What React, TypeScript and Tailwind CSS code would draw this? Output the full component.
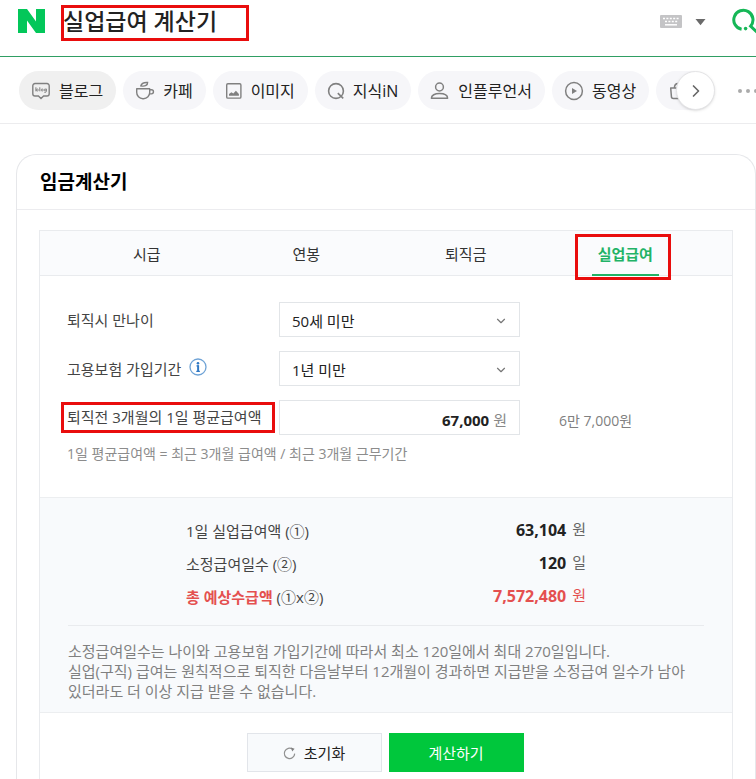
import React, { useState } from 'react';
import { ChevronDown, ChevronRight } from 'lucide-react';

const TABS = ['시급', '연봉', '퇴직금', '실업급여'];

// Red marker box drawn around its relative parent
function Marker({ className }: { className: string }) {
  return (
    <span
      aria-hidden="true"
      className={`pointer-events-none absolute border-[3px] border-[#e90d0d] ${className}`}
    />
  );
}

function BlogIcon() {
  return (
    <svg width="20" height="20" viewBox="0 0 20 20" fill="none" stroke="#808080" strokeWidth="1.4">
      <path d="M4 2.5h12a2.2 2.2 0 0 1 2.2 2.2v8.1A2.2 2.2 0 0 1 16 15h-3.4L10 17.6 7.4 15H4a2.2 2.2 0 0 1-2.2-2.2V4.7A2.2 2.2 0 0 1 4 2.5z" />
      <path d="M4.9 6.3v4M8.8 6.3v4" strokeWidth="1" />
      <circle cx="6.3" cy="9" r="1" strokeWidth="0.9" />
      <circle cx="11.2" cy="9" r="1" strokeWidth="0.9" />
      <circle cx="14.2" cy="9" r="1" strokeWidth="0.9" />
      <path d="M15.4 7.7v2.8q0 1.1-2.1.9" strokeWidth="0.9" />
    </svg>
  );
}

function CafeIcon() {
  return (
    <svg width="20" height="20" viewBox="0 0 20 20" fill="none" stroke="#808080" strokeWidth="1.4">
      <path d="M1.7 7.7h13v3.6a6.2 6.2 0 0 1-6.2 6.4h-.6a6.2 6.2 0 0 1-6.2-6.4z" strokeLinejoin="round" />
      <path d="M14.8 8.8h1.6a2 2 0 0 1 0 4.1h-2" />
      <path d="M5.8 4.9C6.4 2.6 8.4 1.2 12.6 1.5c.1 2.5-2.2 4.3-6.8 3.4z" />
    </svg>
  );
}

function ImageIcon() {
  return (
    <svg width="18" height="20" viewBox="0 0 18 20" fill="none" stroke="#808080" strokeWidth="1.4">
      <rect x="1.7" y="2.7" width="14.2" height="14.4" rx="1.2" />
      <path d="M4 14.7v-1.6l2.4-1.9 1.9 1.2 2.6-2.6 3 3.1v1.8z" fill="#808080" stroke="none" />
    </svg>
  );
}

function KinIcon() {
  return (
    <svg width="18" height="20" viewBox="0 0 18 20" fill="none" stroke="#808080" strokeWidth="1.6">
      <circle cx="9" cy="10" r="7.4" />
      <path d="M10.8 12.2l5.4 5.2" />
    </svg>
  );
}

function PersonIcon() {
  return (
    <svg width="20" height="20" viewBox="0 0 20 20" fill="none" stroke="#808080" strokeWidth="1.5">
      <circle cx="9.5" cy="6" r="3.9" />
      <path d="M1.4 17.3c0-3 3.4-4.8 8.1-4.8s8.1 1.8 8.1 4.8z" strokeLinejoin="round" />
    </svg>
  );
}

function PlayIcon() {
  return (
    <svg width="20" height="20" viewBox="0 0 20 20" fill="none" stroke="#808080" strokeWidth="1.5">
      <circle cx="10" cy="10" r="8.4" />
      <path d="M8 6.9v6.2l5-3.1z" fill="#808080" stroke="none" />
    </svg>
  );
}

function BagIcon() {
  return (
    <svg width="20" height="20" viewBox="0 0 20 20" fill="none" stroke="#808080" strokeWidth="1.5">
      <path d="M2.7 7h14.6v8.4a2 2 0 0 1-2 2H5.4a2 2 0 0 1-2-2z" strokeLinejoin="round" />
      <path d="M6.4 7c0-3 1.4-4.6 3.8-4.6S14 4 14 7" />
    </svg>
  );
}

const CHIPS = [
  { label: '블로그', icon: <BlogIcon />, active: true },
  { label: '카페', icon: <CafeIcon /> },
  { label: '이미지', icon: <ImageIcon /> },
  { label: '지식iN', icon: <KinIcon /> },
  { label: '인플루언서', icon: <PersonIcon /> },
  { label: '동영상', icon: <PlayIcon /> },
];

function SearchHeader() {
  return (
    <header className="flex h-[57px] items-start overflow-hidden border-b border-[#2f9e63] pl-[18px] pt-[5px]">
      <a href="#" aria-label="NAVER" className="mt-1 shrink-0">
        <svg width="27" height="24" viewBox="0 0 27 24">
          <path d="M0 0h9l9 12.6V0h9v24h-9L9 11.4V24H0z" fill="#03c75a" />
        </svg>
      </a>
      <div className="relative ml-4 h-9 w-[188px] shrink-0">
        <input
          aria-label="검색어"
          defaultValue="실업급여 계산기"
          className="h-[33px] w-full bg-transparent px-0.5 text-[23px] font-medium text-[#222] outline-none"
        />
        <Marker className="inset-0" />
      </div>
      <div className="flex-1" />
      <button aria-label="입력기" className="mt-2.5 flex shrink-0 items-center">
        <svg width="22" height="13" viewBox="0 0 22 13">
          <rect width="22" height="13" rx="1" fill="#c4c4c6" />
          <path d="M3 3.5h17M5 6.5h13" stroke="#fff" strokeWidth="1.5" strokeDasharray="2 1.4" />
          <path d="M5 9.8h12" stroke="#fff" strokeWidth="1.5" />
        </svg>
      </button>
      <button aria-label="자동완성" className="ml-[13px] mt-3.5 shrink-0">
        <svg width="11" height="7" viewBox="0 0 11 7">
          <path d="M0.5 0h10L5.5 6.2z" fill="#6a6a6a" />
        </svg>
      </button>
      <button aria-label="검색" className="-mr-[5px] ml-[26px] mt-[3px] shrink-0">
        <svg width="29" height="28" viewBox="0 0 29 28" fill="none" stroke="#16b757" strokeWidth="3">
          <path d="M9.6 21.3A9.6 9.6 0 1 1 18.6 18.2L27 26" />
          <circle cx="13.6" cy="20.6" r="1.8" fill="#16b757" stroke="none" />
        </svg>
      </button>
    </header>
  );
}

function CategoryNav() {
  return (
    <nav className="flex items-center overflow-hidden border-b border-[#ececee] pb-[13px] pl-[19px] pt-3.5">
      <div className="flex min-w-0 flex-1 gap-[7px] overflow-hidden">
        {CHIPS.map((chip) => (
          <a
            key={chip.label}
            href="#"
            className={`flex h-[39px] shrink-0 items-center gap-2 whitespace-nowrap rounded-full pl-3 pr-[13px] text-base text-[#222] ${
              chip.active ? 'bg-[#f0f0f0]' : 'bg-[#f6f6f9]'
            }`}
          >
            {chip.icon}
            <span>{chip.label}</span>
          </a>
        ))}
        <a
          href="#"
          aria-label="쇼핑"
          className="flex h-[39px] w-20 shrink-0 items-center rounded-full bg-[#f6f6f9] pl-3"
        >
          <BagIcon />
        </a>
      </div>
      <button
        aria-label="다음"
        className="z-10 -ml-5 flex h-[39px] w-[39px] shrink-0 items-center justify-center rounded-full border border-[#e4e4e6] bg-white shadow-sm"
      >
        <ChevronRight className="h-5 w-5 text-[#666]" strokeWidth={2} />
      </button>
      <button aria-label="더보기" className="-mr-0.5 ml-[23px] flex shrink-0 gap-1">
        <span className="h-1 w-1 rounded-full bg-[#aaa]" />
        <span className="h-1 w-1 rounded-full bg-[#aaa]" />
        <span className="h-1 w-1 rounded-full bg-[#aaa]" />
      </button>
    </nav>
  );
}

interface SelectBoxProps {
  id: string;
  options: string[];
}

function SelectBox({ id, options }: SelectBoxProps) {
  return (
    <div className="relative h-[35px] w-[241px]">
      <select
        id={id}
        className="h-full w-full appearance-none border border-[#e2e5e8] bg-white px-3 pt-1 text-[15px] text-[#222] outline-none"
      >
        {options.map((option) => (
          <option key={option}>{option}</option>
        ))}
      </select>
      <ChevronDown
        className="pointer-events-none absolute right-3 top-3 h-3.5 w-3.5 text-[#777]"
        strokeWidth={2}
      />
    </div>
  );
}

function CalculatorForm() {
  return (
    <div className="px-[27px] pb-[33px] pt-[26px] text-[15px] text-[#444]">
      <div className="grid grid-cols-[212px_1fr] items-center gap-y-3.5">
        <label htmlFor="age" className="pt-0.5">퇴직시 만나이</label>
        <SelectBox id="age" options={['50세 미만', '50세 이상']} />

        <div className="flex items-center gap-2">
          <label htmlFor="period" className="pt-0.5">고용보험 가입기간</label>
          <button type="button" aria-label="가입기간 안내" className="pb-1">
            <svg width="18" height="18" viewBox="0 0 18 18" fill="none">
              <circle cx="9" cy="9" r="8" stroke="#6fa3d6" strokeWidth="1.3" />
              <circle cx="9" cy="5.2" r="1.3" fill="#2f78c4" />
              <path d="M7.5 7.9h1.6v5.4M7.3 13.4h3.6" stroke="#2f78c4" strokeWidth="1.3" />
              <path d="M9.2 7.3v6" stroke="#2f78c4" strokeWidth="1.8" />
            </svg>
          </button>
        </div>
        <SelectBox id="period" options={['1년 미만', '1년 이상 ~ 3년 미만', '3년 이상 ~ 5년 미만']} />

        <div className="relative">
          <label htmlFor="wage">퇴직전 3개월의 1일 평균급여액</label>
          <Marker className="-bottom-1 -left-1.5 -top-1 right-1" />
        </div>
        <div className="flex items-center">
          <div className="flex h-[35px] w-[241px] items-center border border-[#e2e5e8] bg-white pr-3 pt-1.5">
            <input
              id="wage"
              defaultValue="67,000"
              className="w-0 min-w-0 flex-1 bg-transparent text-right font-bold text-[#222] outline-none"
            />
            <span className="ml-1 text-[#888]">원</span>
          </div>
          <span className="ml-[39px] pt-1.5 text-sm text-[#808080]">6만 7,000원</span>
        </div>
      </div>
      <p className="mt-[9px] text-sm text-[#8c8c8c]">
        1일 평균급여액 = 최근 3개월 급여액 / 최근 3개월 근무기간
      </p>
    </div>
  );
}

function ResultPanel() {
  return (
    <section className="border-y border-[#eceef0] bg-[#f8fafc] px-7 pb-[11px] pt-4 text-[15px]">
      <dl className="mx-auto w-[400px] max-w-full text-[#444]">
        <div className="flex h-[33px] items-center justify-between">
          <dt className="pt-0.5">1일 실업급여액 (①)</dt>
          <dd className="flex items-center gap-1.5 pb-0.5 text-[#666]">
            <strong className="text-base text-[#222]">63,104</strong>원
          </dd>
        </div>
        <div className="flex h-[33px] items-center justify-between">
          <dt className="pt-0.5">소정급여일수 (②)</dt>
          <dd className="flex items-center gap-1.5 pb-0.5 text-[#666]">
            <strong className="text-base text-[#222]">120</strong>일
          </dd>
        </div>
        <div className="flex h-[33px] items-center justify-between">
          <dt className="pt-0.5">
            <strong className="text-[#e4504f]">총 예상수급액</strong> (①x②)
          </dt>
          <dd className="flex items-center gap-1.5 pb-0.5 text-[#e4504f]">
            <strong className="text-base">7,572,480</strong>원
          </dd>
        </div>
      </dl>
      <p className="mt-3 border-t border-[#e9ebee] pr-2 pt-[15px] leading-5 text-[#808080]">
        소정급여일수는 나이와 고용보험 가입기간에 따라서 최소 120일에서 최대 270일입니다.
        <br />
        실업(구직) 급여는 원칙적으로 퇴직한 다음날부터 12개월이 경과하면 지급받을 소정급여 일수가 남아있더라도 더 이상 지급 받을 수 없습니다.
      </p>
    </section>
  );
}

export default function App() {
  const [tab, setTab] = useState('실업급여');

  return (
    <div className="flex min-h-screen flex-col overflow-hidden bg-white font-['Open_Sans','Noto_Sans_CJK_KR',sans-serif]">
      <SearchHeader />
      <CategoryNav />

      <main className="ml-4 mt-[30px] flex flex-1 flex-col rounded-t-[20px] border border-b-0 border-[#e6e7ea]">
        <h1 className="flex h-[55px] items-center border-b border-[#ececef] pl-[23px] text-[19px] font-bold text-black">
          임금계산기
        </h1>

        <div className="ml-[22px] mr-[22px] mt-5 flex-1 border border-b-0 border-[#e9ebee]">
          {/* Calculator type tabs */}
          <div role="tablist" className="flex h-[45px] border-b border-[#e9ebee] bg-[#fafbfd] px-[27px]">
            {TABS.map((name) => (
              <button
                key={name}
                role="tab"
                aria-selected={tab === name}
                onClick={() => setTab(name)}
                className="flex flex-1 justify-center text-[15px]"
              >
                <span
                  className={`relative flex h-[45px] items-center px-1.5 ${
                    tab === name
                      ? 'border-b-2 border-[#22b366] pt-1 font-bold text-[#22b366]'
                      : 'pt-0.5 text-[#333]'
                  }`}
                >
                  {name}
                  {name === '실업급여' && <Marker className="-bottom-1.5 -left-[17px] -right-3 top-[3px]" />}
                </span>
              </button>
            ))}
          </div>

          <CalculatorForm />
          <ResultPanel />

          <div className="flex justify-center gap-[7px] pr-0.5 pt-5 text-[15px]">
            <button
              type="button"
              className="flex h-[39px] w-[135px] items-center justify-center gap-2 border border-[#e2e5ea] bg-[#f8fafc] pt-0.5 text-[#222]"
            >
              <svg width="13" height="13" viewBox="0 0 13 13" fill="none" stroke="#909090" strokeWidth="1.2">
                <path d="M9.6 2.2A5.2 5.2 0 1 0 11.7 6.6" />
                <path d="M8 0.6l3.6 1.2-2.4 2.6z" fill="#808080" stroke="none" />
              </svg>
              초기화
            </button>
            <button type="button" className="h-[39px] w-[135px] bg-[#00c73c] pt-0.5 text-white">
              계산하기
            </button>
          </div>
        </div>
      </main>
    </div>
  );
}
